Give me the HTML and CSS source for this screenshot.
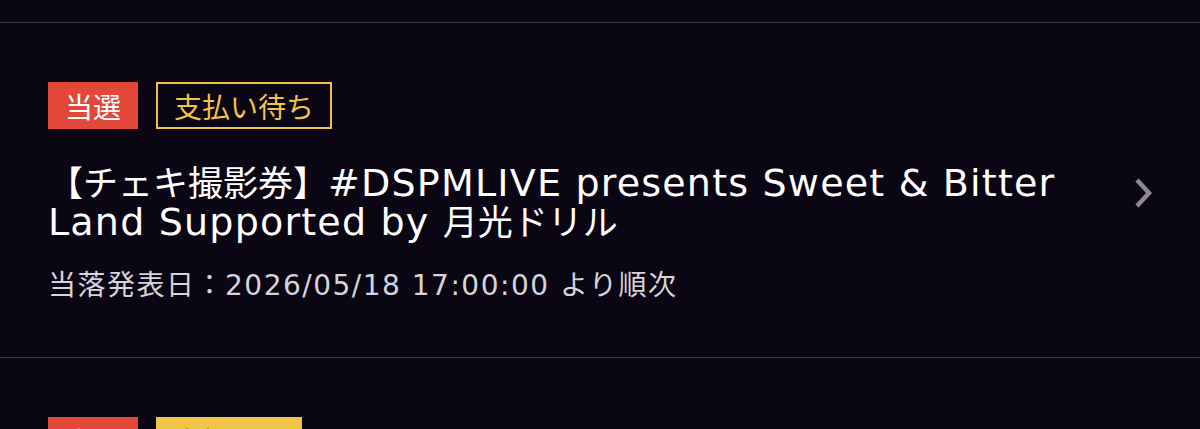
FILE: index.html
```html
<!DOCTYPE html>
<html lang="ja">
<head>
<meta charset="utf-8">
<link rel="stylesheet" href="styles.css">
</head>
<body>
<div class="list">
  <div class="item">
    <div class="item-body">
      <div class="badges">
        <span class="badge badge-won">当選</span>
        <span class="badge badge-wait">支払い待ち</span>
      </div>
      <div class="title">【チェキ撮影券】<span class="en">#DSPMLIVE presents Sweet &amp; Bitter Land Supported by </span>月光ドリル</div>
      <div class="date">当落発表日：2026/05/18 17:00:00 より順次</div>
    </div>
    <div class="chevron">
      <svg width="20" height="32" viewBox="0 0 20 32"><path d="M3 3 L15 16 L3 29" fill="none" stroke="#8d8894" stroke-width="4.5"/></svg>
    </div>
  </div>
  <div class="item">
    <div class="item-body">
      <div class="badges">
        <span class="badge badge-won">当選</span>
        <span class="badge badge-done">支払済み</span>
      </div>
    </div>
  </div>
</div>
</body>
</html>
```
FILE: styles.css
```css
html, body {
  margin: 0;
  padding: 0;
  background: #0b0614;
  font-family: "DejaVu Sans", "Noto Sans CJK JP", sans-serif;
  color: #ffffff;
  overflow: hidden;
  height: 429px;
}
.list {
  padding-top: 22px;
}
.item {
  border-top: 1px solid #3b3644;
  display: flex;
  align-items: center;
  padding: 59px 46px 53px 48px;
}
.item-body {
  flex: 1;
}
.badges {
  display: flex;
  gap: 18px;
}
.badge {
  height: 47px;
  box-sizing: border-box;
  display: flex;
  align-items: center;
  padding: 0 17px;
  font-size: 28px;
  font-family: "Noto Sans CJK JP", sans-serif;
}
.badge-won {
  background: #e2473a;
  color: #ffffff;
}
.badge-wait {
  border: 2px solid #f2c344;
  color: #f2c344;
  padding: 0 16px;
}
.badge-done {
  background: #f2c344;
  color: #0b0614;
}
.title {
  margin-top: 35px;
  font-size: 35px;
  line-height: 38px;
  max-width: 1060px;
}
.title .en {
  font-size: 38px;
  letter-spacing: 1.2px;
}
.date {
  margin-top: 26px;
  font-size: 28px;
  line-height: 36px;
  letter-spacing: 1.5px;
  color: #d6d3da;
}
.chevron {
  width: 20px;
  height: 32px;
  margin-left: 30px;
}
```
